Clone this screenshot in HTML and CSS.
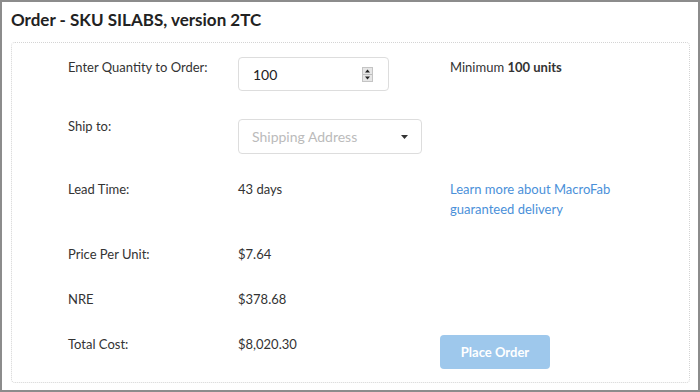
FILE: index.html
```html
<!DOCTYPE html>
<html lang="en">
<head>
  <meta charset="UTF-8">
  <title>Order - SKU SILABS</title>
  <link rel="stylesheet" href="styles.css">
</head>
<body>
  <div class="frame">
    <h1 class="title">Order - SKU SILABS, version 2TC</h1>

    <div class="order-box">
      <div class="row">
        <div class="label">Enter Quantity to Order:</div>
        <div class="field">
          <div class="qty-input">
            <span>100</span>
            <span class="spinner">
              <svg width="11" height="15" viewBox="0 0 11 15">
                <rect x="0.5" y="0.5" width="10" height="14" fill="#e6e6e6" stroke="#c4c4c4"/>
                <line x1="1" y1="7.5" x2="10" y2="7.5" stroke="#bdbdbd"/>
                <path d="M3 5.5 L5.5 2.5 L8 5.5 Z" fill="#222"/>
                <path d="M3 9.5 L5.5 12.5 L8 9.5 Z" fill="#222"/>
              </svg>
            </span>
          </div>
        </div>
        <div class="note">Minimum <b>100 units</b></div>
      </div>

      <div class="row">
        <div class="label">Ship to:</div>
        <div class="field">
          <div class="select-box">
            <span class="placeholder">Shipping Address</span>
            <svg width="7" height="4" viewBox="0 0 7 4"><path d="M0 0 L7 0 L3.5 4 Z" fill="#333"/></svg>
          </div>
        </div>
        <div></div>
      </div>

      <div class="row">
        <div class="label">Lead Time:</div>
        <div class="value">43 days</div>
        <a class="note link" href="#">Learn more about MacroFab guaranteed delivery</a>
      </div>

      <div class="row">
        <div class="label">Price Per Unit:</div>
        <div class="value">$7.64</div>
        <div></div>
      </div>

      <div class="row">
        <div class="label">NRE</div>
        <div class="value">$378.68</div>
        <div></div>
      </div>

      <div class="row">
        <div class="label">Total Cost:</div>
        <div class="value">$8,020.30</div>
        <div><button class="order-btn" disabled>Place Order</button></div>
      </div>
    </div>
  </div>
</body>
</html>
```

FILE: styles.css
```css
html, body {
  margin: 0;
  padding: 0;
}

body {
  font-family: Lato, "Open Sans", sans-serif;
  color: #333;
  background: #fff;
}

.frame {
  height: 392px;
  box-sizing: border-box;
  border: 2px solid #8c8c8c;
  padding: 0 8px 7px 9px;
  display: flex;
  flex-direction: column;
}

.title {
  font-size: 17px;
  font-weight: bold;
  color: #222;
  margin: 0;
  height: 40px;
  line-height: 36px;
}

.order-box {
  flex: 1;
  border: 1px dotted #d4d4d4;
  border-radius: 4px;
  padding: 14px 0 0 56px;
  display: flex;
  flex-direction: column;
  gap: 25px;
  font-size: 13px;
}

.row {
  display: grid;
  grid-template-columns: 170px 212px 1fr;
  align-items: start;
}

.label, .value, .note {
  line-height: 20px;
}

.note {
  color: #333;
}

.note b {
  font-weight: bold;
}

.link {
  color: #4a90d9;
  text-decoration: none;
  width: 200px;
}

.qty-input {
  width: 151px;
  height: 34px;
  box-sizing: border-box;
  border: 1px solid #ddd;
  border-radius: 4px;
  display: flex;
  align-items: center;
  justify-content: space-between;
  padding: 0 15px 0 14px;
  color: #222;
  font-size: 14px;
}

.spinner {
  display: flex;
}

.select-box {
  margin-top: 3px;
  width: 184px;
  height: 35px;
  box-sizing: border-box;
  border: 1px solid #ddd;
  border-radius: 4px;
  display: flex;
  align-items: center;
  justify-content: space-between;
  padding: 0 13px 0 13px;
}

.placeholder {
  color: #bbb;
  font-size: 14px;
}

.order-btn {
  margin-top: 1px;
  margin-left: -10px;
  width: 110px;
  height: 34px;
  border: none;
  border-radius: 4px;
  background: #9ec8ec;
  color: #fff;
  font-family: Lato, sans-serif;
  font-size: 13px;
  font-weight: bold;
}
```
